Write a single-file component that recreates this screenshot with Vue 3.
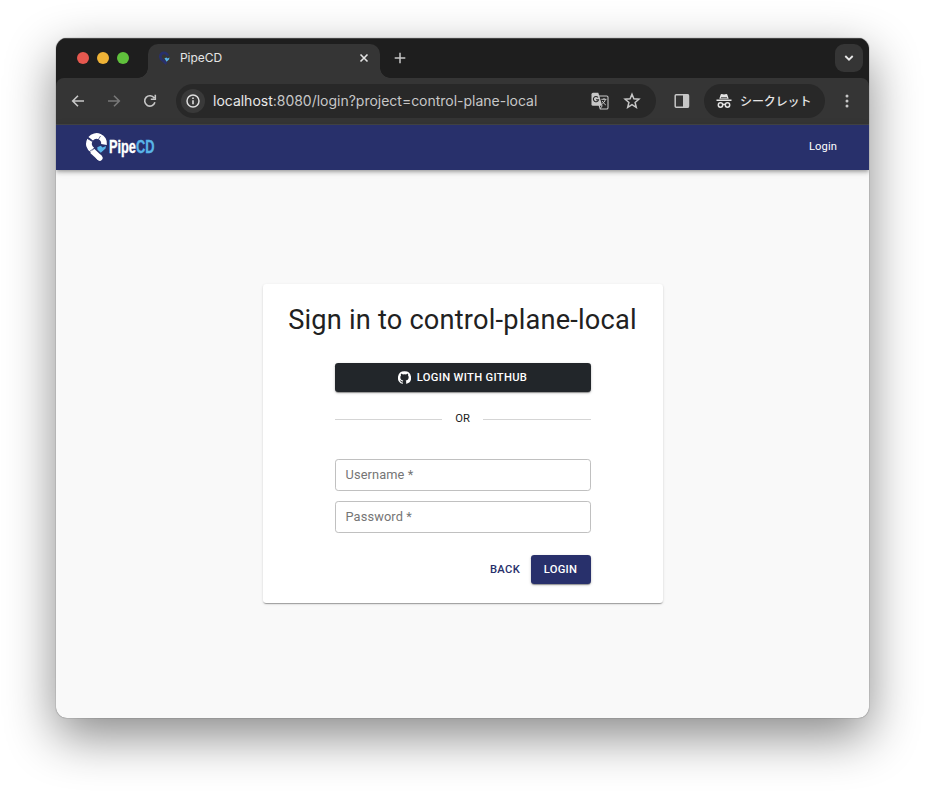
<script setup>
const lights = ['red', 'amber', 'green']
const fields = ['Username', 'Password']
</script>

<template>
  <main class="desktop">
    <section class="window">
      <div class="tabs">
        <div class="lights">
          <span v-for="c in lights" :key="c" class="light" :class="c"></span>
        </div>
        <div class="tab">
          <svg class="favicon" width="12" height="14" viewBox="0 0 24 28" fill="none">
            <path d="M7 18A7.500 7.500 0 1 1 17.500 9.500" stroke="#29306c" stroke-width="5.500" />
            <path d="m7 18 8 7.500" stroke="#29306c" stroke-width="5.500" />
            <path d="m11 14.500 4-1.500 2 2 4-2-1 4-5 4.500Z" fill="#59b5e8" />
          </svg>
          <span class="tab-title">PipeCD</span>
          <svg class="close" width="10" height="10" viewBox="0 0 10 10"><path d="m1.500 1.500 7 7m0-7-7 7" fill="none" stroke="#e3e3e3" stroke-width="1.600" /></svg>
        </div>
        <svg class="plus" width="12" height="12" viewBox="0 0 12 12"><path d="M6 .7v10.600M.7 6h10.600" stroke="#c7c7c7" stroke-width="1.500" /></svg>
        <div class="tab-search">
          <svg width="10" height="8" viewBox="0 0 10 8"><path d="m1.300 2 3.700 3.700L8.700 2" fill="none" stroke="#e8e8e8" stroke-width="1.800" /></svg>
        </div>
      </div>

      <div class="toolbar">
        <svg class="nav-icon" width="16" height="16" viewBox="0 0 16 16"><path d="M14 8H3m5-5.300L2.700 8 8 13.300" /></svg>
        <svg class="nav-icon dim" width="16" height="16" viewBox="0 0 16 16"><path d="M2 8h11M8 2.700 13.300 8 8 13.300" /></svg>
        <svg class="nav-icon" width="16" height="16" viewBox="0 0 16 16"><path d="M12.900 9.300A5.200 5.200 0 1 1 12.200 5M13.300 1.800v4.500H8.800" /></svg>
        <div class="address">
          <span class="info">
            <svg width="16" height="16" viewBox="0 0 16 16"><circle cx="8" cy="8" r="6" fill="none" stroke="#dedede" stroke-width="1.500" /><path d="M8 7.200V11.300M8 4.600v1.500" stroke="#dedede" stroke-width="1.600" /></svg>
          </span>
          <span class="url"><b>localhost</b>:8080/login?project=control-plane-local</span>
          <svg class="translate" width="18" height="18" viewBox="0 0 18 18">
            <path d="M8 4h7.700q1.300 0 1.300 1.300v10.400q0 1.300-1.300 1.300H9.300L8 13" fill="none" stroke="#c7c7c7" stroke-width="1.100" />
            <path d="M2 .8h5.300L11.300 13.700H2q-1.500 0-1.500-1.500V2.300Q.5.800 2 .8Z" fill="#c7c7c7" />
            <path d="M7 5.500A2.600 2.600 0 1 0 7.500 7.800H5" fill="none" stroke="#282828" stroke-width="1.100" />
            <path d="M10.300 7.300h5.200M13 6v1.300m1.500 0q-.7 3-3.300 4.800M11.300 9q1 2.200 3.500 4M9.300 16.500l2-2.800" fill="none" stroke="#c7c7c7" stroke-width="1" />
          </svg>
          <svg class="star" width="18" height="18" viewBox="0 0 18 18"><path d="m9 2.200 1.900 4.600 5 .4-3.800 3.200 1.200 4.900L9 12.700l-4.300 2.600 1.200-4.900-3.800-3.200 5-.4Z" fill="none" stroke="#c7c7c7" stroke-width="1.500" /></svg>
        </div>
        <svg class="panel" width="16" height="16" viewBox="0 0 16 16"><rect x="1.200" y="1.700" width="13.300" height="12.600" rx="1" fill="none" stroke="#c7c7c7" stroke-width="1.500" /><path d="M9 1.500h5.500v13H9Z" fill="#c7c7c7" /></svg>
        <div class="incognito">
          <svg width="16" height="16" viewBox="0 0 16 16">
            <path d="M.5 6.500h15v1.400H.5ZM3.300 5.800 4.700 1.600Q5 .8 5.800 1L8 1.600l2.200-.6q.8-.2 1.100.6l1.400 4.200Z" fill="#e3e3e3" />
            <path d="M5 4.700h6" stroke="#282828" stroke-width=".8" />
            <g fill="none" stroke="#e3e3e3" stroke-width="1.500"><circle cx="4.500" cy="12" r="2.200" /><circle cx="11.500" cy="12" r="2.200" /><path d="M6.700 11.700q1.300-.8 2.600 0" /></g>
          </svg>
          <span>シークレット</span>
        </div>
        <svg class="more" width="4" height="14" viewBox="0 0 4 14" fill="#c7c7c7"><circle cx="2" cy="2" r="1.500" /><circle cx="2" cy="7" r="1.500" /><circle cx="2" cy="12" r="1.500" /></svg>
      </div>

      <header class="appbar">
        <div class="brand">
          <svg width="22" height="30" viewBox="0 0 22 30">
            <g fill="none" stroke="#fff" stroke-width="5.800">
              <path d="M4.700 6.800A7.500 7.500 0 0 1 18 12.500" />
              <path d="M3.900 8.100A7.500 7.500 0 0 0 6.700 18.300" />
              <path d="m6.200 18.800 7.700 7.200" />
              <path d="m12.800 25 1 1" stroke-width="5.600" stroke-linecap="round" />
            </g>
            <path d="m1.500 6.500 5 3.200M3.500 19.500l5-3.500M14.500 4 12 8" stroke="#29306c" stroke-width=".7" />
            <path d="m11.300 15.300 3.400-1.500 1.900 1.800 3.500-1.700-.6 2.600-4.700 4.200-3.300-2.900Z" fill="#59b5e8" />
          </svg>
          <span class="wordmark">Pipe<b>CD</b></span>
        </div>
        <span class="login-link">Login</span>
      </header>

      <div class="page">
        <form class="card" @submit.prevent>
          <h1>Sign in to control-plane-local</h1>
          <div class="content">
            <button type="button" class="btn github">
              <svg width="13" height="13" viewBox="0 0 24 24" fill="#fff"><path d="M12 .3a12 12 0 0 0-3.800 23.400c.6.1.8-.3.800-.6v-2.100c-3.300.7-4-1.500-4-1.500-.6-1.400-1.400-1.800-1.400-1.800-1.100-.7.1-.7.1-.7 1.200.1 1.900 1.200 1.900 1.200 1 1.800 2.800 1.300 3.500 1 .1-.8.4-1.300.7-1.600-2.700-.3-5.500-1.300-5.500-6 0-1.200.5-2.300 1.300-3.100-.2-.4-.6-1.600 0-3.200 0 0 1-.3 3.400 1.200a11.500 11.500 0 0 1 6 0c2.400-1.500 3.400-1.200 3.400-1.200.6 1.600.2 2.800.1 3.200.8.8 1.200 1.900 1.200 3.200 0 4.600-2.800 5.600-5.500 5.900.5.400.9 1.100.9 2.200v3.300c0 .3.1.7.8.6A12 12 0 0 0 12 .3" /></svg>
              <span>LOGIN WITH GITHUB</span>
            </button>
            <div class="divider"><i></i><span>OR</span><i></i></div>
            <div v-for="f in fields" :key="f" class="field">{{ f }} *</div>
            <div class="actions">
              <button type="button" class="btn back">BACK</button>
              <button type="submit" class="btn login">LOGIN</button>
            </div>
          </div>
        </form>
      </div>
    </section>
  </main>
</template>

<style>
body { background: #fff; }
</style>

<style scoped>
* { box-sizing: border-box; }
svg { display: block; flex: none; }
.desktop { height: 792px; padding: 38px 56px 74px; overflow: hidden; font-family: Roboto, "Liberation Sans", sans-serif; }
.window { display: flex; flex-direction: column; width: 813px; height: 680px; border-radius: 11px; overflow: hidden; background: #f9f9f9; box-shadow: 0 0 1px rgba(0,0,0,.75), 0 18px 50px rgba(0,0,0,.47); }
.tabs { position: relative; z-index: 1; display: flex; height: 40px; flex: none; background: #1e1e1e; padding: 6px 6px 0 21px; box-shadow: inset 0 1px #454545; }
.lights { display: flex; gap: 8px; width: 71px; padding-top: 8px; }
.light { width: 12px; height: 12px; border-radius: 50%; }
.red { background: #e6584f; }
.amber { background: #efb336; }
.green { background: #60c13c; }
.tab { position: relative; display: flex; align-items: center; width: 232px; height: 34px; padding: 0 11px 6px; background: #353535; border-radius: 10px 10px 0 0; }
.tab::before, .tab::after { content: ""; position: absolute; bottom: 0; width: 10px; height: 10px; }
.tab::before { left: -10px; background: radial-gradient(circle at 0 0, #1e1e1e 9.500px, #353535 10px); }
.tab::after { right: -10px; background: radial-gradient(circle at 100% 0, #1e1e1e 9.500px, #353535 10px); }
.tab-title { margin-left: 9px; padding-bottom: 2px; font: 12px Inter, sans-serif; letter-spacing: -.05px; color: #e5e5e5; }
.close { margin-left: auto; }
.plus { margin: 8px 0 0 14px; }
.tab-search { display: grid; place-items: center; width: 28px; height: 28px; margin-left: auto; border-radius: 9px; background: #353535; }
.toolbar { display: flex; align-items: center; height: 47px; flex: none; padding: 0 20px 1px 14px; border-bottom: 1px solid #444547; border-radius: 8px 8px 0 0; background: #353535; box-shadow: 0 0 0 10px #1e1e1e; }
.nav-icon { margin-right: 20px; fill: none; stroke: #c7c7c7; stroke-width: 1.600; }
.nav-icon.dim { stroke: #787878; }
.address { display: flex; align-items: center; width: 480px; height: 34px; margin-left: -2px; padding: 0 15px 0 5px; border-radius: 17px; background: #282828; }
.info { display: grid; place-items: center; width: 24px; height: 24px; border-radius: 50%; background: #393939; }
.url { margin-left: 8px; font: 14px Inter, sans-serif; letter-spacing: -.012px; color: #c7c7c7; white-space: nowrap; }
.url b { font-weight: 400; color: #e8e8e8; }
.translate { margin-left: auto; }
.star { margin-left: 14px; }
.panel { margin-left: 18px; }
.incognito { display: flex; align-items: center; gap: 8px; width: 121px; height: 34px; margin-left: 14px; padding-left: 12px; border-radius: 17px; background: #282828; color: #e5e5e5; font: 500 12px "Noto Sans CJK JP", sans-serif; letter-spacing: -.1px; white-space: nowrap; }
.more { margin-left: auto; }
.appbar { position: relative; display: flex; align-items: center; justify-content: space-between; height: 45px; flex: none; padding: 0 32px 0 30px; background: #28306b; color: #fff; box-shadow: 0 2px 3px -1px rgba(0,0,0,.2), 0 3px 4px rgba(0,0,0,.14), 0 1px 8px rgba(0,0,0,.12); }
.brand { display: flex; align-items: center; gap: 1px; height: 30px; margin-bottom: 2px; }
.wordmark { width: 70px; font: 700 17.500px/20px "Liberation Sans", sans-serif; -webkit-text-stroke: .35px; transform: scaleX(.73); transform-origin: 0 50%; white-space: nowrap; }
.wordmark b { color: #59b5e8; }
.login-link { font-size: 11.200px; letter-spacing: .1px; padding-bottom: 3px; }
.page { display: flex; justify-content: center; align-items: flex-start; flex: 1; padding-top: 114px; }
.card { width: 400px; height: 319px; padding: 18px 24px; border-radius: 3.200px; background: #fff; box-shadow: 0 2px 1px -1px rgba(0,0,0,.2), 0 1px 1px rgba(0,0,0,.14), 0 1px 3px rgba(0,0,0,.12); }
h1 { margin: 0; height: 36px; font-size: 27.200px; line-height: 36px; font-weight: 400; letter-spacing: .2px; text-align: center; color: #212121; white-space: nowrap; }
.content { width: 256px; margin: 25px auto 0; }
.btn { display: flex; align-items: center; justify-content: center; height: 29px; padding: 0; border: 0; border-radius: 3.200px; background: none; font: 500 11.200px Roboto, sans-serif; letter-spacing: .32px; }
.github { width: 100%; gap: 6px; color: #fff; background: #22262a; }
.github, .login { box-shadow: 0 2px 1px -1px rgba(0,0,0,.2), 0 1px 1px rgba(0,0,0,.14), 0 1px 3px rgba(0,0,0,.22); }
.divider { display: flex; align-items: center; gap: 13px; height: 15px; margin: 19px 0 33px; font-size: 11.200px; color: #212121; }
.divider i { flex: 1; height: 1px; margin-top: 1px; background: #d5d5d5; }
.field { display: flex; align-items: center; height: 32px; margin-bottom: 10px; padding: 0 10px 2px; border: 1px solid #c0c0c0; border-radius: 3.200px; font-size: 12.800px; letter-spacing: .12px; color: #757575; }
.actions { display: flex; justify-content: flex-end; margin-top: 22px; }
.back { width: 51px; color: #28306b; }
.login { width: 60px; color: #fff; background: #28306b; }
</style>
